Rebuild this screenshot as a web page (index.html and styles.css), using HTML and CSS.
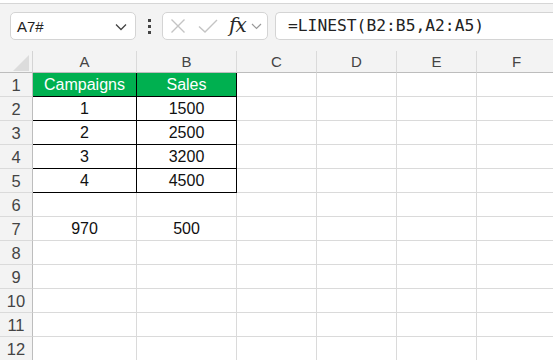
FILE: index.html
```html
<html>
<head>
    <meta charset="utf-8">
    <link rel="stylesheet" href="styles.css">
</head>
<body>
    <div class="topStrip"></div>
    <div class="fbar">
        <div class="nameBox">
            <span class="nameTxt">A7#</span>
            <svg class="chev" width="12" height="8" viewBox="0 0 12 8"><path d="M1 1.5 L6 6.5 L11 1.5" fill="none" stroke="#444" stroke-width="1.3"/></svg>
        </div>
        <div class="dots"><i></i><i></i><i></i></div>
        <div class="fxBox">
            <svg width="16" height="16" viewBox="0 0 16 16"><path d="M1.5 1.5 L14.5 14.5 M14.5 1.5 L1.5 14.5" stroke="#c4c4c4" stroke-width="1.4" fill="none"/></svg>
            <svg width="20" height="16" viewBox="0 0 20 16"><path d="M1 8.5 L7 14 L19 2" stroke="#c4c4c4" stroke-width="1.4" fill="none"/></svg>
            <span class="fx">fx</span>
            <svg class="chevS" width="11" height="7" viewBox="0 0 11 7"><path d="M1 1 L5.5 5.5 L10 1" fill="none" stroke="#999" stroke-width="1.2"/></svg>
        </div>
        <div class="formBox">=LINEST(B2:B5,A2:A5)</div>
    </div>

    <div class="sheet">
        <div class="corner"><svg width="30" height="20" viewBox="0 0 30 20"><path d="M29 3 L29 19 L13 19 Z" fill="#dcdcdc"/></svg></div>
        <div class="colH">A</div>
        <div class="colH">B</div>
        <div class="colH">C</div>
        <div class="colH">D</div>
        <div class="colH">E</div>
        <div class="colH">F</div>
    </div>
    <div class="sheet" id="grid"></div>

    <script>
        var data = {
            1: ['Campaigns', 'Sales'],
            2: ['1', '1500'],
            3: ['2', '2500'],
            4: ['3', '3200'],
            5: ['4', '4500'],
            7: ['970', '500']
        };

        for (var r = 1; r <= 12; r++) {
            var rh = document.createElement('div');
            rh.className = 'rowH';
            rh.innerHTML = r;
            grid.append(rh);
            for (var c = 0; c < 6; c++) {
                var cell = document.createElement('div');
                cell.className = 'cell';
                if (r <= 5 && c < 2) cell.className += ' tb';
                if (r == 1 && c < 2) cell.className += ' hdr';
                if (data[r] && c < 2) cell.innerHTML = data[r][c];
                grid.append(cell);
            }
        }
    </script>
</body>
</html>
```

FILE: styles.css
```css
body {
    margin: 0;
    background-color: #f3f3f3;
    font-family: "Liberation Sans", Arial, sans-serif;
    overflow: hidden;
}

.topStrip {
    height: 3px;
    background-color: #ffffff;
    border-bottom: 1px solid #d6d6d6;
}

.fbar {
    display: flex;
    align-items: center;
    height: 28px;
    padding: 8px 0 0 10px;
    margin-bottom: 11px;
}

.nameBox {
    width: 126px;
    height: 28px;
    box-sizing: border-box;
    border: 1px solid #d4d4d4;
    border-radius: 5px;
    background-color: #ffffff;
    display: flex;
    align-items: center;
    justify-content: space-between;
    padding: 0 8px 0 6px;
}
.nameTxt {
    font-size: 15px;
    color: #222;
}
.chev {
    margin-top: 2px;
}

.dots {
    width: 26px;
    display: flex;
    flex-direction: column;
    align-items: center;
    gap: 3px;
}
.dots i {
    display: block;
    width: 3px;
    height: 3px;
    background-color: #444;
}

.fxBox {
    width: 106px;
    height: 28px;
    box-sizing: border-box;
    border: 1px solid #d4d4d4;
    border-radius: 5px;
    background-color: #ffffff;
    display: flex;
    align-items: center;
    padding: 0 0 0 7px;
    gap: 12px;
}
.fx {
    font-family: "DejaVu Serif", "Liberation Serif", serif;
    font-style: italic;
    font-size: 20px;
    color: #2a2a2a;
    margin-left: -1px;
    margin-top: -3px;
    letter-spacing: -1px;
}
.chevS {
    margin-left: -7px;
}

.formBox {
    flex: 1;
    height: 28px;
    box-sizing: border-box;
    margin-left: 7px;
    border: 1px solid #d4d4d4;
    border-right: none;
    border-radius: 5px 0 0 5px;
    background-color: #ffffff;
    font-family: "DejaVu Sans Mono", "Liberation Mono", monospace;
    font-size: 16.3px;
    color: #222;
    padding: 3px 0 0 12px;
}

.sheet {
    display: grid;
    grid-template-columns: 33px 104px 100px 80px 80px 80px 80px;
    width: 557px;
}

.corner {
    height: 22px;
    border-right: 1px solid #d4d4d4;
    border-bottom: 1px solid #bdbdbd;
    box-sizing: border-box;
    display: flex;
    align-items: flex-end;
}
.colH {
    height: 22px;
    box-sizing: border-box;
    border-right: 1px solid #dadada;
    border-bottom: 1px solid #bdbdbd;
    text-align: center;
    font-size: 15px;
    color: #444;
    line-height: 21px;
}

#grid {
    grid-auto-rows: 24px;
}
.rowH {
    box-sizing: border-box;
    border-right: 1px solid #bdbdbd;
    border-bottom: 1px solid #dadada;
    text-align: center;
    font-size: 16.5px;
    color: #444;
    line-height: 24px;
}
.cell {
    box-sizing: border-box;
    background-color: #ffffff;
    border-right: 1px solid #dadada;
    border-bottom: 1px solid #dadada;
    text-align: center;
    font-size: 16px;
    color: #111;
    line-height: 23px;
}
.tb {
    border-right-color: #000000;
    border-bottom-color: #000000;
}
.hdr {
    background-color: #00b050;
    color: #ffffff;
}
```
